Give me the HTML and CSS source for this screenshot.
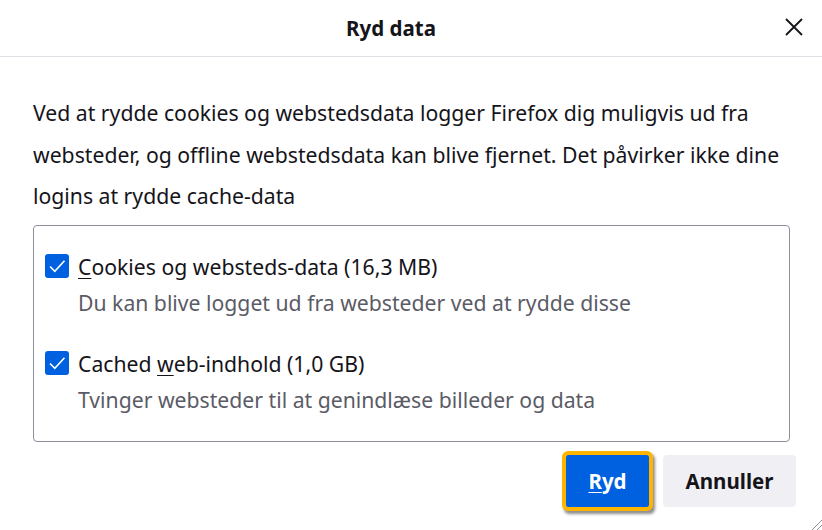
FILE: index.html
```html
<!DOCTYPE html>
<html lang="da">
<head>
<meta charset="utf-8">
<link rel="stylesheet" href="styles.css">
</head>
<body>
<div class="dialog">
  <header class="head">
    <h1 class="title">Ryd data</h1>
    <button class="close" aria-label="Luk">
      <svg width="20" height="20" viewBox="0 0 20 20"><path d="M2 2 L18 18 M18 2 L2 18" stroke="#15141a" stroke-width="1.8" fill="none"/></svg>
    </button>
  </header>
  <main class="body">
    <p class="intro">Ved at rydde cookies og webstedsdata logger Firefox dig muligvis ud fra websteder, og offline webstedsdata kan blive fjernet. Det påvirker ikke dine logins at rydde cache-data</p>
    <div class="box">
      <div class="option">
        <span class="check"><svg width="24" height="24" viewBox="0 0 24 24"><path d="M5 12.5 L9.8 17.3 L19.5 6.8" stroke="#fff" stroke-width="1.6" fill="none"/></svg></span>
        <div class="texts">
          <div class="label"><u>C</u>ookies og websteds-data (16,3 MB)</div>
          <div class="desc">Du kan blive logget ud fra websteder ved at rydde disse</div>
        </div>
      </div>
      <div class="option">
        <span class="check"><svg width="24" height="24" viewBox="0 0 24 24"><path d="M5 12.5 L9.8 17.3 L19.5 6.8" stroke="#fff" stroke-width="1.6" fill="none"/></svg></span>
        <div class="texts">
          <div class="label">Cached <u>w</u>eb-indhold (1,0 GB)</div>
          <div class="desc">Tvinger websteder til at genindlæse billeder og data</div>
        </div>
      </div>
    </div>
    <div class="actions">
      <button class="btn primary"><u>R</u>yd</button>
      <button class="btn secondary">Annuller</button>
    </div>
  </main>
  <svg class="grip" width="12" height="12" viewBox="0 0 12 12"><path d="M12 2 L2 12 M12 7 L7 12" stroke="#8f8f9d" stroke-width="1" fill="none"/></svg>
</div>
</body>
</html>
```
FILE: styles.css
```css
html, body {
  margin: 0;
  padding: 0;
  background: #fff;
}
body {
  font-family: "Noto Sans", "Open Sans", sans-serif;
  color: #15141a;
  width: 822px;
  height: 530px;
  overflow: hidden;
}
.dialog {
  position: relative;
  width: 822px;
  height: 530px;
}
.head {
  height: 56px;
  border-bottom: 1px solid #e0e0e6;
  display: flex;
  align-items: center;
  justify-content: center;
  position: relative;
}
.title {
  margin: 0;
  font-size: 20.5px;
  font-weight: 700;
  transform: translateX(-20px);
}
.close {
  position: absolute;
  right: 18px;
  top: 17px;
  width: 20px;
  height: 20px;
  padding: 0;
  border: none;
  background: none;
  display: flex;
}
.body {
  padding: 0 32px 0 33px;
}
.intro {
  margin: 35px 0 0;
  font-size: 21.2px;
  line-height: 41.5px;
}
.box {
  margin-top: 8px;
  border: 1px solid #8f8f9d;
  border-radius: 4px;
  height: 217px;
  box-sizing: border-box;
  padding: 26px 11px 0;
  display: flex;
  flex-direction: column;
  gap: 31px;
}
.option {
  display: flex;
  gap: 9px;
  align-items: flex-start;
}
.check {
  width: 24px;
  height: 24px;
  background: #0061e0;
  border-radius: 3px;
  display: flex;
  flex: none;
  margin-top: 2px;
}
.texts {
  display: flex;
  flex-direction: column;
}
.label {
  font-size: 21.2px;
  line-height: 30px;
}
.label u, .btn u {
  text-underline-offset: 3px;
  text-decoration-thickness: 1px;
}
.desc {
  font-size: 21.2px;
  line-height: 30px;
  color: #5b5b66;
  margin-top: 6px;
}
.actions {
  display: flex;
  justify-content: flex-end;
  gap: 14px;
  margin-top: 13px;
  margin-right: -6px;
}
.btn {
  font-family: inherit;
  font-size: 20.5px;
  font-weight: 700;
  height: 52px;
  border-radius: 4px;
  border: none;
  padding: 0;
  margin: 0;
}
.primary {
  background: #0061e0;
  color: #fff;
  width: 83px;
  outline: 4px solid #ffb400;
  outline-offset: 0;
  box-shadow: 2px 3px 3px 4px rgba(0,0,0,0.45);
  border-radius: 2px;
}
.secondary {
  background: #f0f0f4;
  color: #15141a;
  width: 133px;
}
.grip {
  position: absolute;
  right: 0;
  bottom: 0;
}
```
